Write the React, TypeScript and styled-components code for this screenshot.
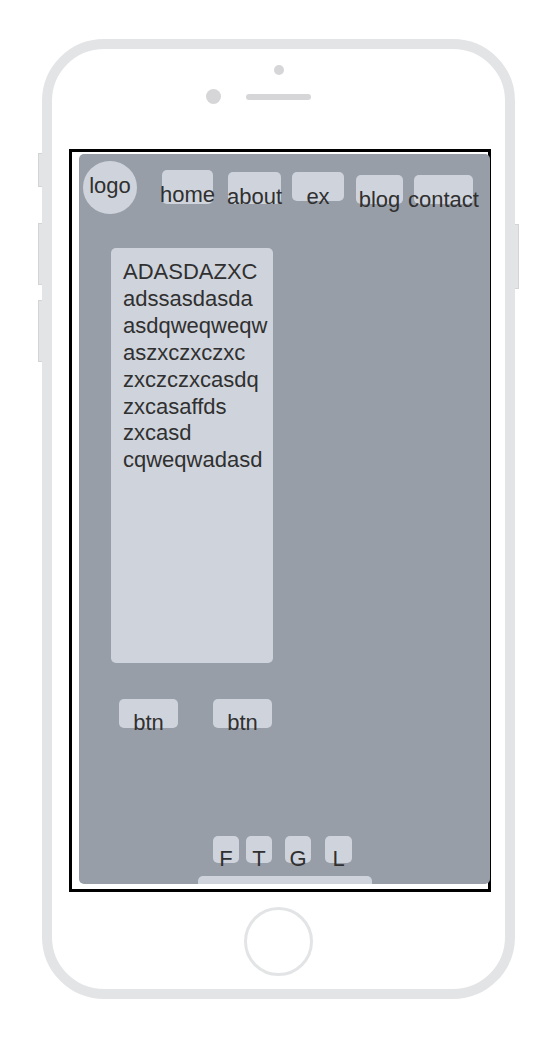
import React from "react";
import styled, { createGlobalStyle } from "styled-components";

const GlobalStyle = createGlobalStyle`
  html, body {
    margin: 0;
    padding: 0;
    background: #ffffff;
  }
  body {
    font-family: "Liberation Sans", Arial, sans-serif;
    color: #333333;
  }
  * { box-sizing: border-box; }
`;

const FRAME = "#e3e4e6";
const PANEL = "#989ea8";
const LIGHT = "#cfd4dc";
const INK = "#303030";

const Phone = styled.div`
  position: relative;
  margin: 39px 0 0 42px;
  width: 473px;
  height: 960px;
  border: 10px solid ${FRAME};
  border-radius: 62px;
  display: flex;
  flex-direction: column;
  align-items: center;
`;

const SideButton = styled.div<{ $side: "left" | "right"; $top: number; $h: number }>`
  position: absolute;
  top: ${(p) => p.$top}px;
  height: ${(p) => p.$h}px;
  width: 4px;
  ${(p) => (p.$side === "left" ? "left: -14px;" : "right: -14px;")}
  background: ${FRAME};
  border: 1px solid #d3d4d6;
  ${(p) => (p.$side === "left" ? "border-right: none;" : "border-left: none;")}
`;

const TopDot = styled.div`
  width: 10px;
  height: 10px;
  border-radius: 50%;
  background: #d6d6d8;
  margin-top: 16px;
`;

const SensorRow = styled.div`
  width: 100%;
  display: grid;
  grid-template-columns: 1fr auto 1fr;
  align-items: center;
  margin-top: 14px;
`;

const Camera = styled.div`
  justify-self: end;
  margin-right: 25px;
  width: 15px;
  height: 15px;
  border-radius: 50%;
  background: #d6d6d8;
`;

const Speaker = styled.div`
  width: 65px;
  height: 6px;
  border-radius: 3px;
  background: #d6d6d8;
`;

const ScreenBox = styled.div`
  align-self: flex-start;
  margin: 45px 0 0 17px;
  width: 422px;
  height: 743px;
  border: 3px solid #000000;
  padding: 2px 0 5px 7px;
`;

const Panel = styled.div`
  width: 411px;
  height: 730px;
  background: ${PANEL};
  border-radius: 5px;
  display: flex;
  flex-direction: column;
  align-items: flex-start;
`;

const Nav = styled.nav`
  display: flex;
  align-items: flex-start;
  padding: 7px 0 0 4px;
`;

const NavItem = styled.div<{ $w: number; $h: number; $top: number; $gap: number; $round?: boolean }>`
  width: ${(p) => p.$w}px;
  height: ${(p) => p.$h}px;
  margin-top: ${(p) => p.$top}px;
  margin-left: ${(p) => p.$gap}px;
  background: ${LIGHT};
  border-radius: ${(p) => (p.$round ? "50%" : "5px")};
  display: flex;
  justify-content: center;
  padding-top: 14px;
  font-size: 22px;
  line-height: 22px;
  color: ${INK};
  white-space: nowrap;
`;

const Card = styled.div`
  margin: 34px 0 0 32px;
  width: 162px;
  height: 415px;
  background: ${LIGHT};
  border-radius: 5px;
  padding: 11px 12px 8px;
  font-size: 22px;
  line-height: 26.9px;
  color: ${INK};
`;

const CardLine = styled.div`
  white-space: nowrap;
`;

const ButtonRow = styled.div`
  display: flex;
  gap: 35px;
  margin: 36px 0 0 40px;
`;

const Button = styled.div`
  width: 59px;
  height: 29px;
  background: ${LIGHT};
  border-radius: 5px;
  display: flex;
  justify-content: center;
  padding-top: 13px;
  font-size: 22px;
  line-height: 22px;
  color: ${INK};
`;

const Footer = styled.div`
  margin-top: auto;
  display: flex;
  flex-direction: column;
  align-items: flex-start;
  width: 100%;
`;

const Socials = styled.div`
  display: flex;
  padding-left: 134px;
`;

const Social = styled.div<{ $gap: number; $w: number }>`
  width: ${(p) => p.$w}px;
  height: 27px;
  margin-left: ${(p) => p.$gap}px;
  background: ${LIGHT};
  border-radius: 5px;
  display: flex;
  justify-content: center;
  padding-top: 12px;
  font-size: 22px;
  line-height: 22px;
  color: ${INK};
`;

const HomeBar = styled.div`
  margin: 13px 0 0 119px;
  width: 174px;
  height: 8px;
  background: ${LIGHT};
  border-radius: 5px 5px 0 0;
`;

const HomeButton = styled.div`
  margin-top: 15px;
  margin-right: 1px;
  width: 69px;
  height: 69px;
  border-radius: 50%;
  border: 3.5px solid ${FRAME};
`;

const navItems = [
  { label: "logo", w: 54, h: 53, top: 0, gap: 0, round: true },
  { label: "home", w: 51, h: 34, top: 9, gap: 25 },
  { label: "about", w: 53, h: 32, top: 11, gap: 15 },
  { label: "ex", w: 52, h: 29, top: 11, gap: 11 },
  { label: "blog", w: 47, h: 29, top: 14, gap: 12 },
  { label: "contact", w: 59, h: 29, top: 14, gap: 11 },
];

const lines = [
  "ADASDAZXC",
  "adssasdasda",
  "asdqweqweqw",
  "aszxczxczxc",
  "zxczczxcasdq",
  "zxcasaffds",
  "zxcasd",
  "cqweqwadasd",
];

const socials = [
  { label: "F", gap: 0, w: 26 },
  { label: "T", gap: 7, w: 26 },
  { label: "G", gap: 13, w: 26 },
  { label: "L", gap: 14, w: 27 },
];

export default function App() {
  return (
    <>
      <GlobalStyle />
      <Phone>
        <SideButton $side="left" $top={104} $h={34} />
        <SideButton $side="left" $top={174} $h={62} />
        <SideButton $side="left" $top={251} $h={62} />
        <SideButton $side="right" $top={175} $h={65} />
        <TopDot />
        <SensorRow>
          <Camera />
          <Speaker />
          <span />
        </SensorRow>
        <ScreenBox>
          <Panel>
            <Nav>
              {navItems.map((n) => (
                <NavItem key={n.label} $w={n.w} $h={n.h} $top={n.top} $gap={n.gap} $round={n.round}>
                  {n.label}
                </NavItem>
              ))}
            </Nav>
            <Card>
              {lines.map((l) => (
                <CardLine key={l}>{l}</CardLine>
              ))}
            </Card>
            <ButtonRow>
              <Button>btn</Button>
              <Button>btn</Button>
            </ButtonRow>
            <Footer>
              <Socials>
                {socials.map((s) => (
                  <Social key={s.label} $gap={s.gap} $w={s.w}>
                    {s.label}
                  </Social>
                ))}
              </Socials>
              <HomeBar />
            </Footer>
          </Panel>
        </ScreenBox>
        <HomeButton />
      </Phone>
    </>
  );
}
